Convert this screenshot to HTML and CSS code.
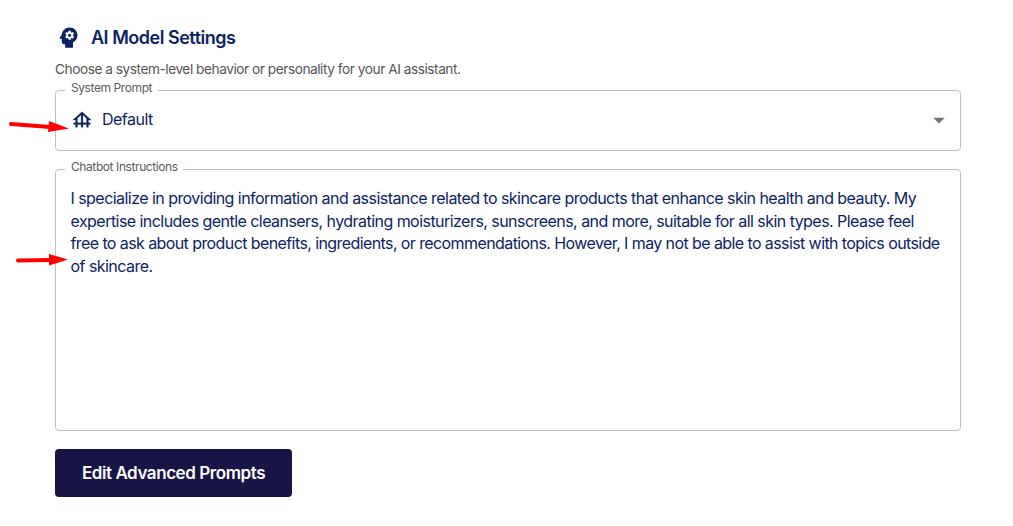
FILE: index.html
```
<!DOCTYPE html>
<html lang="en">
<head>
    <meta charset="utf-8">
    <title>AI Model Settings</title>
    <link rel="stylesheet" href="styles.css">
</head>
<body>
<main class="settings">
    <h2 class="heading">
        <svg class="heading-icon" viewBox="0 0 24 24"><path d="M13 8.57c-.79 0-1.43.64-1.43 1.43s.64 1.43 1.43 1.43 1.43-.64 1.43-1.43-.64-1.43-1.43-1.43z"/><path d="M13 3C9.25 3 6.2 5.94 6.02 9.64L4.1 12.2c-.25.33-.01.8.4.8H6v3c0 1.1.9 2 2 2h1v3h7v-4.68c2.36-1.12 4-3.53 4-6.32 0-3.87-3.13-7-7-7zm3 7c0 .13-.01.26-.02.39l.83.66c.08.06.1.16.05.25l-.8 1.39c-.05.09-.16.12-.24.09l-.99-.4c-.21.16-.43.29-.67.39L14 13.83c-.01.1-.1.17-.2.17h-1.6c-.1 0-.18-.07-.2-.17l-.15-1.06c-.25-.1-.47-.23-.68-.39l-.99.4c-.09.03-.2 0-.25-.09l-.8-1.39c-.05-.08-.03-.19.05-.25l.84-.66c-.01-.13-.02-.26-.02-.39s.02-.27.04-.39l-.85-.66c-.08-.06-.1-.16-.05-.26l.8-1.38c.05-.09.15-.12.24-.09l1 .4c.2-.15.43-.29.67-.39L12 6.17c.02-.1.1-.17.2-.17h1.6c.1 0 .18.07.2.17l.15 1.06c.24.1.46.23.67.39l1-.4c.09-.03.2 0 .24.09l.8 1.38c.05.09.03.2-.05.26l-.85.66c.03.12.04.25.04.39z"/></svg>
        <span>AI Model Settings</span>
    </h2>
    <p class="description">Choose a system-level behavior or personality for your AI assistant.</p>
    <fieldset class="field field-select">
        <legend>System Prompt</legend>
        <div class="select">
            <svg class="select-icon" viewBox="0 0 24 24"><path d="M19 12h3L12 3 2 12h3v3H3v2h2v3h2v-3h4v3h2v-3h4v3h2v-3h2v-2h-2v-3zM7 15v-4.81l4-3.6V15H7zm6 0V6.59l4 3.6V15h-4z"/></svg>
            <span class="select-value">Default</span>
            <svg class="select-arrow" viewBox="0 0 24 24"><path d="M7 10l5 5 5-5z"/></svg>
        </div>
    </fieldset>
    <fieldset class="field field-text">
        <legend>Chatbot Instructions</legend>
        <p class="instructions">I specialize in providing information and assistance related to skincare products that enhance skin health and beauty. My<br>
            expertise includes gentle cleansers, hydrating moisturizers, sunscreens, and more, suitable for all skin types. Please feel<br>
            <span class="tight">free to ask about product benefits, ingredients, or recommendations. However, I may not be able to assist with topics outside</span><br>
            of skincare.</p>
    </fieldset>
    <button class="button" type="button">Edit Advanced Prompts</button>
</main>
<svg class="pointer pointer-select" viewBox="0 0 62 16"><path d="M3 5L42 8" /><polygon points="41,2 61,9.500 40,13"/></svg>
<svg class="pointer pointer-text" viewBox="0 0 56 14"><path d="M3 7.500L35 7" /><polygon points="34,1 53,6.500 34,12.500"/></svg>
</body>
</html>
```
FILE: styles.css
```
body {
    margin: 0;
    background: #fff;
    color: #0b2461;
    font-family: Inter, "Liberation Sans", sans-serif;
}

.settings {
    width: 906px;
    padding: 24px 0 0 55px;
}

.heading {
    display: flex;
    align-items: center;
    gap: 9px;
    height: 27px;
    margin: 0;
    font-size: 18px;
    font-weight: 600;
    letter-spacing: -0.48px;
}

.heading-icon {
    width: 27px;
    height: 27px;
    fill: currentColor;
}

.description {
    height: 20px;
    margin: 8px 0 5px;
    color: #555;
    font-size: 13.7px;
    line-height: 20px;
    letter-spacing: -0.47px;
    white-space: nowrap;
}

.field {
    box-sizing: border-box;
    min-width: 0;
    margin: 0;
    padding: 0 15px;
    border: 1px solid #c0c0c0;
    border-radius: 4px;
}

.field legend {
    height: 12px;
    margin-left: -6px;
    padding: 0 5px 0 6px;
    color: #5c5c5c;
    font-size: 12px;
    line-height: 8px;
    letter-spacing: -0.41px;
    white-space: nowrap;
}

.field-select {
    height: 67px;
}

.select {
    display: flex;
    align-items: center;
    height: 46px;
}

.select-icon {
    width: 22px;
    height: 22px;
    margin-top: 1px;
    fill: currentColor;
    stroke: currentColor;
    stroke-width: 0.3;
}

.select-value {
    flex: 1;
    margin-left: 9px;
    font-size: 16px;
    letter-spacing: -0.52px;
}

.select-arrow {
    width: 28px;
    height: 28px;
    margin: 1px -8px 0 0;
    fill: #757575;
}

.field-text {
    height: 268px;
    margin-top: 12px;
}

.instructions {
    margin: 12px 0 0 -0.5px;
    font-size: 16px;
    line-height: 22.6px;
    letter-spacing: -0.545px;
    white-space: nowrap;
}

.tight {
    letter-spacing: -0.59px;
}

.button {
    display: block;
    width: 237px;
    height: 48px;
    margin-top: 18px;
    padding: 0;
    border: 0;
    border-radius: 4px;
    background: #191446;
    color: #fff;
    font: 600 17px Inter, "Liberation Sans", sans-serif;
    letter-spacing: -0.43px;
}

/* red arrows drawn over the fields */
.pointer {
    position: absolute;
    fill: #f00;
    stroke: #f00;
    stroke-width: 0;
}

.pointer path {
    stroke-width: 4;
    stroke-linecap: round;
}

.pointer-select {
    top: 119px;
    left: 8px;
    width: 62px;
    height: 16px;
}

.pointer-text {
    top: 253px;
    left: 15px;
    width: 56px;
    height: 14px;
}
```
